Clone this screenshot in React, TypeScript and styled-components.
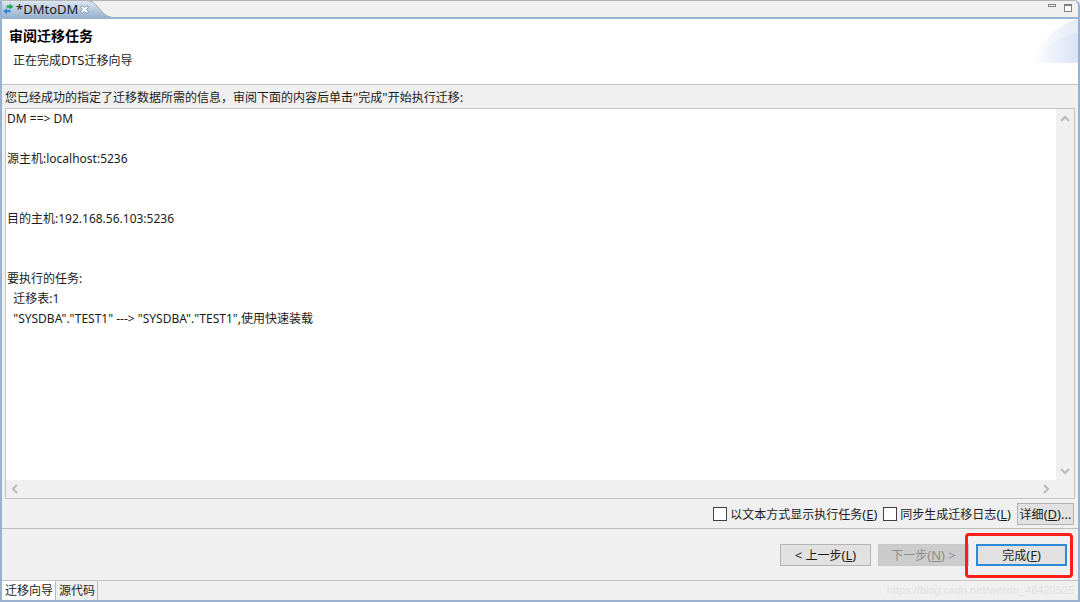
import React from "react";
import styled, { createGlobalStyle } from "styled-components";

const GlobalStyle = createGlobalStyle`
  * { box-sizing: border-box; }
  body {
    margin: 0;
    background: #f0f0f0;
    color: #1c1c1c;
    font-family: "Noto Sans", "Noto Sans CJK SC", sans-serif;
    font-size: 12px;
    line-height: 20px;
  }
  button, input, textarea { font: inherit; color: inherit; margin: 0; }
`;

const Window = styled.div`
  display: flex;
  flex-direction: column;
  min-height: 100vh;
  border: 2px solid #99b1cd;
  border-top: 1px solid #b4b4b4;
  border-radius: 0 6px 0 0;
  background: #f0f0f0;
`;

const TabBar = styled.header`
  display: flex;
  justify-content: space-between;
  height: 18px;
  border-bottom: 2px solid #99b4d1;
`;

const EditorTab = styled.div`
  display: flex;
  align-items: center;
  height: 16px;
  padding-left: 1px;
  gap: 2px;
  background: linear-gradient(#dce6f1, #99b4d1);
`;

const TabTitle = styled.span`
  font-size: 13px;
  line-height: 16px;
`;

const IconButton = styled.button`
  display: flex;
  padding: 0;
  border: 0;
  background: none;
`;

const TabEnd = styled.svg`
  display: block;
  margin-right: auto;
`;

const WindowActions = styled.div`
  display: flex;
  align-items: flex-start;
  gap: 8px;
  padding: 3px 6px 0 0;
`;

const WizardHeader = styled.section`
  display: flex;
  justify-content: space-between;
  height: 66px;
  background: #fff;
  border-bottom: 1px solid #c4c4c4;
`;

const Heading = styled.div`
  padding: 7px 7px 0;
`;

const Title = styled.h1`
  margin: 0;
  font-size: 14px;
  line-height: 20px;
  font-weight: 700;
  color: #000;
`;

const Subtitle = styled.p`
  margin: 4px 0 0 4px;
`;

const Body = styled.main`
  display: flex;
  flex: 1;
  flex-direction: column;
  padding: 2px 3px 3px;
`;

const Prompt = styled.label`
  line-height: 21px;
`;

const Viewer = styled.div`
  display: grid;
  flex: 1;
  grid-template-columns: 1fr 18px;
  grid-template-rows: 1fr 18px;
  border: 1px solid #c3c3c3;
  background: #f0f0f0;
`;

const Summary = styled.textarea`
  display: block;
  width: 100%;
  min-height: 220px;
  padding: 0 1px;
  border: 0;
  outline: 0;
  resize: none;
  overflow: hidden;
  white-space: pre;
  background: #fff;
`;

const ScrollTrack = styled.div<{ $vertical?: boolean }>`
  display: flex;
  flex-direction: ${(p) => (p.$vertical ? "column" : "row")};
  align-items: center;
  justify-content: space-between;
  padding: ${(p) => (p.$vertical ? "5px 0 4px" : "0 5px 0 4px")};
`;

const Options = styled.div`
  display: flex;
  align-items: center;
  justify-content: flex-end;
  gap: 6px;
  padding: 4px 1px 0 0;
`;

const Option = styled.label`
  display: flex;
  align-items: center;
  gap: 3px;
`;

const CheckBox = styled.input`
  appearance: none;
  width: 14px;
  height: 14px;
  border: 1px solid #404040;
  background: #fff;
`;

const Latin = styled.span`
  font-size: 13px;
`;

const Button = styled.button<{ $wide?: boolean; $primary?: boolean }>`
  width: ${(p) => (p.$wide ? "91px" : "57px")};
  height: 22px;
  padding: 0;
  border: ${(p) => (p.$primary ? "2px solid #2b8bd9" : "1px solid #b4b4b4")};
  background: #e1e1e1;
  line-height: 18px;
  white-space: nowrap;
  &:disabled {
    border-color: #c8c8c8;
    background: #cccccc;
    color: #8c8c8c;
  }
`;

const Footer = styled.footer`
  display: flex;
  justify-content: flex-end;
  gap: 7px;
  padding: 15px 11px 14px;
  border-top: 1px solid #bdbdbd;
`;

const Highlight = styled.div`
  position: relative;
  &::after {
    content: "";
    position: absolute;
    inset: -11px -6px -12px -11px;
    border: 3px solid #fc1f17;
    border-radius: 4px;
    pointer-events: none;
  }
`;

const PageTabs = styled.nav`
  position: relative;
  display: flex;
  height: 20px;
  border-top: 1px solid #c4c4c4;
`;

const PageTab = styled.button<{ $active?: boolean }>`
  padding: 0 2px 0 3px;
  border: 0;
  border-right: 1px solid #b9b9b9;
  background: ${(p) => (p.$active ? "#fff" : "#f0f0f0")};
  line-height: 18px;
`;

const Watermark = styled.span`
  position: absolute;
  right: 4px;
  bottom: 0;
  font-family: "Liberation Sans", sans-serif;
  font-size: 11px;
  line-height: 20px;
  color: #e0e0e0;
`;

const summary = [
  "DM ==> DM",
  "",
  "源主机:localhost:5236",
  "",
  "",
  "目的主机:192.168.56.103:5236",
  "",
  "",
  "要执行的任务:",
  "  迁移表:1",
  '  "SYSDBA"."TEST1" ---> "SYSDBA"."TEST1",使用快速装载',
].join("\n");

const chevrons = {
  up: "M1 7 5 3 9 7",
  down: "M1 3 5 7 9 3",
  left: "M7 1 3 5 7 9",
  right: "M3 1 7 5 3 9",
};

const Chevron = ({ dir }: { dir: keyof typeof chevrons }) => (
  <svg width="10" height="10" viewBox="0 0 10 10" fill="none">
    <path d={chevrons[dir]} stroke="#b9b9b9" strokeWidth="2" />
  </svg>
);

const TransferIcon = () => (
  <svg width="11" height="12" viewBox="0 0 11 12">
    <path d="M3.5 2.6H6.5V0.7L10.5 3.7 6.5 6.5V4.7H3.5Z" fill="#22a84a" />
    <path d="M7.5 7H4V5.2L0 8.2 4 11.2V9.2H7.5Z" fill="#3088de" />
  </svg>
);

const CloseIcon = () => (
  <svg width="9" height="9" viewBox="0 0 9 9">
    <path
      d="M1 1H3L4.5 2.5 6 1H8V3L6.5 4.5 8 6V8H6L4.5 6.5 3 8H1V6L2.5 4.5 1 3Z"
      fill="#fff"
      stroke="#8793a0"
      strokeWidth="0.9"
    />
  </svg>
);

const HeaderArt = () => (
  <svg width="48" height="44" viewBox="0 0 48 44">
    <defs>
      <linearGradient id="sweepOuter" x1="0" x2="1">
        <stop offset="0" stopColor="#fff" />
        <stop offset="1" stopColor="#e3ebf8" />
      </linearGradient>
      <linearGradient id="sweepInner" x1="0" x2="1">
        <stop offset="0" stopColor="#f8faff" stopOpacity="0.3" />
        <stop offset="1" stopColor="#d9e3f5" />
      </linearGradient>
    </defs>
    <path d="M0 44C10 24 26 5 48 0V44Z" fill="url(#sweepOuter)" />
    <path d="M3 44C15 28 29 17 48 14V44Z" fill="url(#sweepInner)" />
  </svg>
);

export default function App() {
  return (
    <>
      <GlobalStyle />
      <Window>
        <TabBar>
          <EditorTab>
            <TransferIcon />
            <TabTitle>*DMtoDM</TabTitle>
            <IconButton aria-label="关闭">
              <CloseIcon />
            </IconButton>
          </EditorTab>
          <TabEnd width="22" height="16" viewBox="0 0 22 16">
            <defs>
              <linearGradient id="tabFill" x1="0" y1="0" x2="0" y2="1">
                <stop offset="0" stopColor="#dce6f1" />
                <stop offset="1" stopColor="#99b4d1" />
              </linearGradient>
            </defs>
            <path d="M0 0C8 0 12 15 22 16H0Z" fill="url(#tabFill)" />
            <path d="M0 0C8 0 12 15 22 16" fill="none" stroke="#a5a9ad" />
          </TabEnd>
          <WindowActions>
            <IconButton aria-label="最小化">
              <svg width="8" height="4" viewBox="0 0 8 4">
                <rect x="0.5" y="0.5" width="7" height="2" fill="#fff" stroke="#808080" />
              </svg>
            </IconButton>
            <IconButton aria-label="最大化">
              <svg width="8" height="8" viewBox="0 0 8 8">
                <rect x="0.5" y="0.5" width="7" height="7" fill="#fff" stroke="#808080" />
                <path d="M0 1.5H8" stroke="#808080" />
              </svg>
            </IconButton>
          </WindowActions>
        </TabBar>

        <WizardHeader>
          <Heading>
            <Title>审阅迁移任务</Title>
            <Subtitle>
              正在完成<Latin>DTS</Latin>迁移向导
            </Subtitle>
          </Heading>
          <HeaderArt />
        </WizardHeader>

        <Body>
          <Prompt htmlFor="summary">
            您已经成功的指定了迁移数据所需的信息，审阅下面的内容后单击<Latin>"</Latin>完成
            <Latin>"</Latin>开始执行迁移<Latin>:</Latin>
          </Prompt>
          <Viewer>
            <Summary id="summary" readOnly value={summary} />
            <ScrollTrack $vertical>
              <Chevron dir="up" />
              <Chevron dir="down" />
            </ScrollTrack>
            <ScrollTrack>
              <Chevron dir="left" />
              <Chevron dir="right" />
            </ScrollTrack>
          </Viewer>
          <Options>
            <Option>
              <CheckBox type="checkbox" />
              <span>
                以文本方式显示执行任务<Latin>(<u>E</u>)</Latin>
              </span>
            </Option>
            <Option>
              <CheckBox type="checkbox" />
              <span>
                同步生成迁移日志<Latin>(<u>L</u>)</Latin>
              </span>
            </Option>
            <Button>
              详细<Latin>(<u>D</u>)...</Latin>
            </Button>
          </Options>
        </Body>

        <Footer>
          <Button $wide>
            <Latin>&lt; </Latin>上一步<Latin>(<u>L</u>)</Latin>
          </Button>
          <Button $wide disabled>
            下一步<Latin>(<u>N</u>) &gt;</Latin>
          </Button>
          <Highlight>
            <Button $wide $primary>
              完成<Latin>(<u>F</u>)</Latin>
            </Button>
          </Highlight>
        </Footer>

        <PageTabs>
          <PageTab $active>迁移向导</PageTab>
          <PageTab>源代码</PageTab>
          <Watermark>https://blog.csdn.net/weixin_48420525</Watermark>
        </PageTabs>
      </Window>
    </>
  );
}
